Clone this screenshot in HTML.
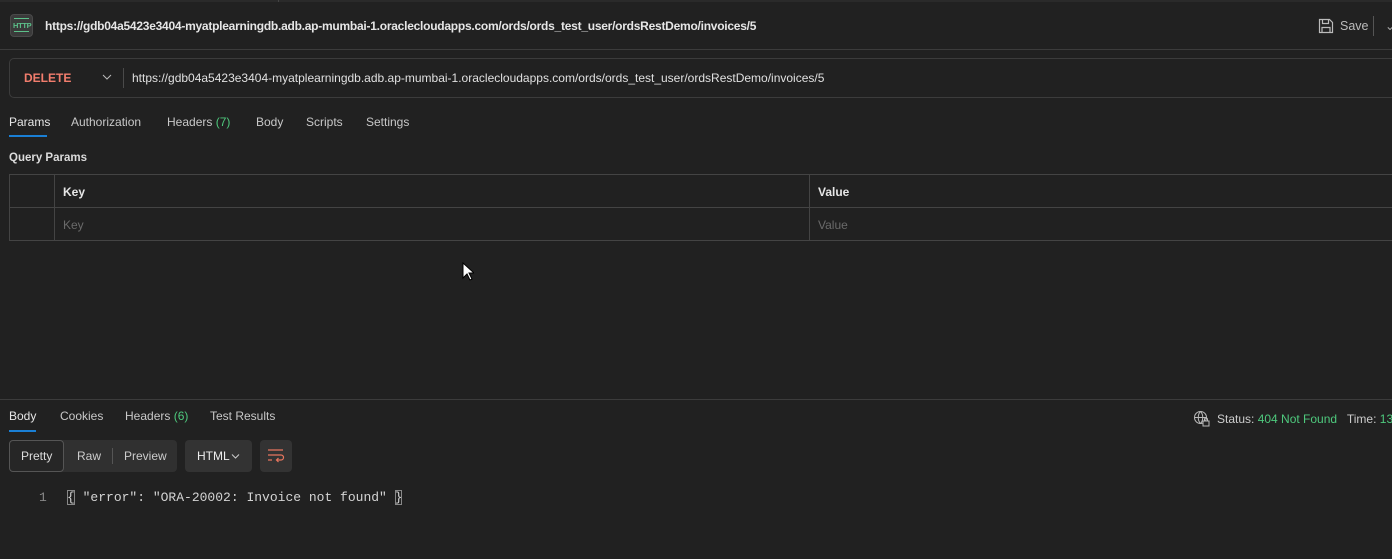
<!DOCTYPE html>
<html><head><meta charset="utf-8"><style>
*{box-sizing:border-box;margin:0;padding:0}
body{width:1392px;height:559px;background:#212121;font-family:"Liberation Sans",sans-serif;font-size:12px;color:#d4d4d4;position:relative;overflow:hidden}
.a{position:absolute;white-space:nowrap}
.tab{position:absolute;font-size:12px;color:#c8c8c8;white-space:nowrap}
.g{color:#4ec97d}
</style></head><body>
<div class="a" style="left:0;top:0;width:1392px;height:2px;background:#2a2a2a"></div>
<div class="a" style="left:278px;top:0;width:1px;height:2px;background:#444"></div>
<div class="a" style="left:10px;top:14px;width:23px;height:23px;border-radius:4px;background:#3a3a3a;border:1px solid #4a4a4a"></div>
<div class="a" style="left:13px;top:21px;font-size:7.5px;color:#5cc18a;font-weight:bold;letter-spacing:-0.3px">HTTP</div>
<div class="a" style="left:14px;top:18px;width:15px;height:1px;background:#5cc18a"></div>
<div class="a" style="left:14px;top:31px;width:15px;height:1px;background:#5cc18a"></div>
<div class="a" style="left:45px;top:19px;font-size:12px;letter-spacing:-0.25px;font-weight:bold;color:#e6e6e6">https://gdb04a5423e3404-myatplearningdb.adb.ap-mumbai-1.oraclecloudapps.com/ords/ords_test_user/ordsRestDemo/invoices/5</div>
<svg class="a" style="left:1318px;top:18px" width="16" height="16" viewBox="0 0 16 16" fill="none" stroke="#bbb" stroke-width="1.2"><path d="M1.5 1.5h10l3 3v10h-13z"/><path d="M4.5 1.5v4h6v-4"/><path d="M4 14.5v-5h8v5"/></svg>
<div class="a" style="left:1340px;top:19px;font-size:12.5px;color:#bbb">Save</div>
<div class="a" style="left:1373px;top:16px;width:1px;height:20px;background:#555"></div>
<div class="a" style="left:1385px;top:19px;color:#aaa">⌄</div>
<div class="a" style="left:0;top:49px;width:1392px;height:1px;background:#3c3c3c"></div>
<div class="a" style="left:9px;top:58px;width:1400px;height:40px;border:1px solid #3c3c3c;border-radius:5px"></div>
<div class="a" style="left:24px;top:71px;font-size:12px;font-weight:bold;color:#f27d6d">DELETE</div>
<svg class="a" style="left:102px;top:74px" width="10" height="6" viewBox="0 0 10 6"><path d="M1 1l4 4 4-4" stroke="#bbb" fill="none"/></svg>
<div class="a" style="left:123px;top:68px;width:1px;height:20px;background:#4a4a4a"></div>
<div class="a" style="left:132px;top:71px;font-size:12px;color:#e0e0e0">https://gdb04a5423e3404-myatplearningdb.adb.ap-mumbai-1.oraclecloudapps.com/ords/ords_test_user/ordsRestDemo/invoices/5</div>
<div class="tab" style="left:9px;top:115px;color:#e6e6e6">Params</div>
<div class="a" style="left:9px;top:135px;width:38px;height:2px;background:#1a7fd4"></div>
<div class="tab" style="left:71px;top:115px">Authorization</div>
<div class="tab" style="left:167px;top:115px">Headers <span class="g">(7)</span></div>
<div class="tab" style="left:256px;top:115px">Body</div>
<div class="tab" style="left:306px;top:115px">Scripts</div>
<div class="tab" style="left:366px;top:115px">Settings</div>
<div class="a" style="left:9px;top:152px;font-size:11.5px;font-weight:bold;color:#dcdcdc">Query Params</div>
<div class="a" style="left:9px;top:174px;width:1400px;height:67px;border:1px solid #444"></div>
<div class="a" style="left:9px;top:207px;width:1400px;height:1px;background:#444"></div>
<div class="a" style="left:54px;top:174px;width:1px;height:67px;background:#444"></div>
<div class="a" style="left:809px;top:174px;width:1px;height:67px;background:#444"></div>
<div class="a" style="left:63px;top:185px;font-weight:bold;color:#e6e6e6">Key</div>
<div class="a" style="left:818px;top:185px;font-weight:bold;color:#e6e6e6">Value</div>
<div class="a" style="left:63px;top:218px;color:#6a6a6a">Key</div>
<div class="a" style="left:818px;top:218px;color:#6a6a6a">Value</div>
<svg class="a" style="left:462px;top:262px" width="12" height="19" viewBox="0 0 12 19"><path d="M1 1v15l4-4 3 6 2-1-3-6h5z" fill="#fff" stroke="#000"/></svg>
<div class="a" style="left:0;top:399px;width:1392px;height:1px;background:#3c3c3c"></div>
<div class="tab" style="left:9px;top:409px;color:#e6e6e6">Body</div>
<div class="a" style="left:9px;top:430px;width:27px;height:2px;background:#1a7fd4"></div>
<div class="tab" style="left:60px;top:409px">Cookies</div>
<div class="tab" style="left:125px;top:409px">Headers <span class="g">(6)</span></div>
<div class="tab" style="left:210px;top:409px">Test Results</div>
<svg class="a" style="left:1193px;top:410px" width="17" height="17" viewBox="0 0 17 17" fill="none" stroke="#bbb" stroke-width="1"><circle cx="7.5" cy="7.5" r="6"/><path d="M1.5 7.5h12M7.5 1.5c-3 3-3 9 0 12M7.5 1.5c3 3 3 9 0 12"/><rect x="10" y="11" width="6" height="5" fill="#212121"/><path d="M11.5 11v-1.5a1.5 1.5 0 013 0V11"/></svg>
<div class="a" style="left:1217px;top:412px;font-size:12px;color:#ccc">Status: <span class="g">404 Not Found</span>&nbsp;&nbsp; Time: <span class="g">136</span></div>
<div class="a" style="left:9px;top:440px;width:168px;height:32px;background:#303030;border-radius:4px"></div>
<div class="a" style="left:9px;top:440px;width:55px;height:32px;border:1px solid #555;border-radius:4px;background:#262626"></div>
<div class="a" style="left:21px;top:449px;font-size:12px;color:#ddd">Pretty</div>
<div class="a" style="left:77px;top:449px;font-size:12px;color:#ccc">Raw</div>
<div class="a" style="left:112px;top:448px;width:1px;height:16px;background:#555"></div>
<div class="a" style="left:124px;top:449px;font-size:12px;color:#ccc">Preview</div>
<div class="a" style="left:185px;top:440px;width:67px;height:32px;background:#333;border-radius:4px"></div>
<div class="a" style="left:197px;top:449px;font-size:12px;color:#eee">HTML</div>
<svg class="a" style="left:231px;top:454px" width="9" height="5" viewBox="0 0 9 5"><path d="M1 0.5l3.5 3.5 3.5-3.5" stroke="#ccc" fill="none"/></svg>
<div class="a" style="left:260px;top:440px;width:32px;height:32px;background:#333;border-radius:4px"></div>
<svg class="a" style="left:267px;top:448px" width="18" height="16" viewBox="0 0 18 16" fill="none" stroke="#e8765e" stroke-width="1.2"><path d="M1 2h15M1 7h13a2.5 2.5 0 010 5h-4M11.5 10l-2 2 2 2M1 12h4"/></svg>
<div class="a" style="left:39px;top:490px;font-family:'Liberation Mono',monospace;font-size:13px;color:#888">1</div>
<div class="a" style="left:67px;top:490px;font-family:'Liberation Mono',monospace;font-size:13px;color:#d4d4d4;white-space:pre"><span style="outline:1px solid #888;outline-offset:-1px">{</span> "error": "ORA-20002: Invoice not found" <span style="outline:1px solid #888;outline-offset:-1px">}</span></div>
</body></html>
